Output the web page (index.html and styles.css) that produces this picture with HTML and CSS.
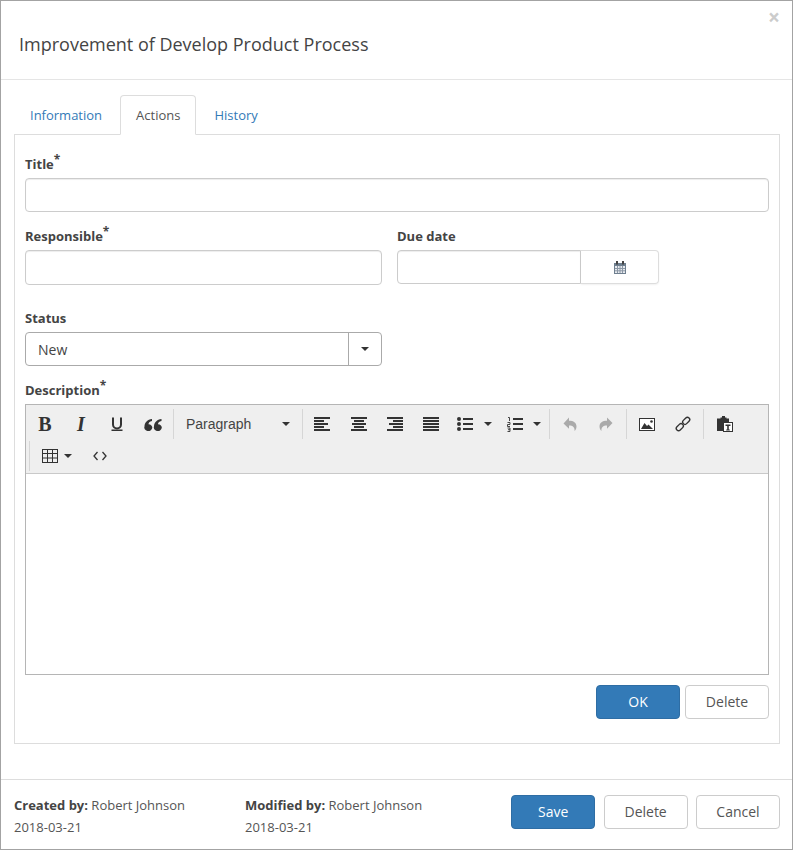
FILE: index.html
```html
<!DOCTYPE html>
<html lang="en">
  <head>
    <meta charset="UTF-8" />
    <title>Improvement of Develop Product Process</title>
    <link rel="stylesheet" href="styles.css">
  </head>
  <body>
    <div class="modal">
      <div class="modal-header">
        <h1 class="modal-title">Improvement of Develop Product Process</h1>
        <span class="close">×</span>
      </div>

      <ul class="tabs">
        <li class="tab"><a href="#">Information</a></li>
        <li class="tab active"><a href="#">Actions</a></li>
        <li class="tab"><a href="#">History</a></li>
      </ul>

      <div class="panel">
        <div class="field">
          <label class="label">Title<sup class="req">*</sup></label>
          <input type="text" class="input" />
        </div>

        <div class="two-cols">
          <div>
            <label class="label">Responsible<sup class="req">*</sup></label>
            <input type="text" class="input input-tall" />
          </div>
          <div>
            <label class="label">Due date</label>
            <div class="date-group">
              <input type="text" class="input date-input" />
              <div class="date-btn">
                <svg width="12" height="13" viewBox="0 0 12 13">
                  <rect x="0" y="2" width="12" height="11" fill="#6f7f8f" />
                  <rect x="1" y="5" width="10" height="7" fill="#e8ebef" />
                  <path d="M3.5 5v7M6 5v7M8.5 5v7M1 7.5h10M1 9.8h10" stroke="#8c98a6" stroke-width="1" fill="none" />
                  <rect x="2" y="0" width="2" height="3.5" fill="#444" />
                  <rect x="8" y="0" width="2" height="3.5" fill="#444" />
                </svg>
              </div>
            </div>
          </div>
        </div>

        <div class="field status-field">
          <label class="label">Status</label>
          <div class="select">
            <span class="select-text">New</span>
            <span class="select-arrow"><i class="caret"></i></span>
          </div>
        </div>

        <div class="field">
          <label class="label">Description<sup class="req">*</sup></label>
          <div class="editor">
            <div class="toolbar">
              <div class="group first">
                <span class="tool glyph-b">B</span>
                <span class="tool glyph-i">I</span>
                <span class="tool">
                  <svg width="14" height="16" viewBox="0 0 14 16">
                    <path d="M3 1.5v7a4 4 0 0 0 8 0v-7" stroke="#333" stroke-width="2" fill="none" />
                    <rect x="1.5" y="13.5" width="11" height="1.5" fill="#333" />
                  </svg>
                </span>
                <span class="tool">
                  <svg width="18" height="13" viewBox="0 0 18 13">
                    <path d="M8 1v2C5.5 3.500 4.500 5 4.500 6.200A4 3.400 0 1 1 0.500 8.500C0.500 4.500 3.500 1.500 8 1zM17.500 1v2C15 3.500 14 5 14 6.200A4 3.400 0 1 1 10 8.500C10 4.500 13 1.500 17.500 1z" fill="#333" />
                  </svg>
                </span>
              </div>

              <div class="group">
                <span class="tool format-select">
                  <span>Paragraph</span>
                  <i class="caret"></i>
                </span>
              </div>

              <div class="group align-group">
                <span class="tool">
                  <svg width="16" height="14" viewBox="0 0 16 14">
                    <path d="M0 0h16v2H0zM0 3h10v2H0zM0 6h14v2H0zM0 9h10v2H0zM0 12h16v2H0z" fill="#333" />
                  </svg>
                </span>
                <span class="tool tool-center">
                  <svg width="16" height="14" viewBox="0 0 16 14">
                    <path d="M0 0h16v2H0zM3 3h10v2H3zM1 6h14v2H1zM3 9h10v2H3zM0 12h16v2H0z" fill="#333" />
                  </svg>
                </span>
                <span class="tool">
                  <svg width="16" height="14" viewBox="0 0 16 14">
                    <path d="M0 0h16v2H0zM6 3h10v2H6zM2 6h14v2H2zM6 9h10v2H6zM0 12h16v2H0z" fill="#333" />
                  </svg>
                </span>
                <span class="tool">
                  <svg width="16" height="14" viewBox="0 0 16 14">
                    <path d="M0 0h16v2H0zM0 3h16v2H0zM0 6h16v2H0zM0 9h16v2H0zM0 12h16v2H0z" fill="#333" />
                  </svg>
                </span>
                <span class="tool tool-split tool-bullets">
                  <svg width="16" height="14" viewBox="0 0 16 14">
                    <circle cx="2" cy="2" r="2" fill="#333" />
                    <circle cx="2" cy="7" r="2" fill="#333" />
                    <circle cx="2" cy="12" r="2" fill="#333" />
                    <path d="M6 1h10v2H6zM6 6h10v2H6zM6 11h10v2H6z" fill="#333" />
                  </svg>
                  <i class="caret"></i>
                </span>
                <span class="tool tool-split tool-numbered">
                  <svg width="16" height="15" viewBox="0 0 16 15">
                    <path d="M1 0.500h1.500v3.500M0.500 5.500h2.500v2h-2.500v2h2.500M0.500 11h2.500v3.500h-2.500M1 12.700h2" stroke="#333" stroke-width="0.900" fill="none" />
                    <path d="M6 1h10v2H6zM6 6h10v2H6zM6 11h10v2H6z" fill="#333" />
                  </svg>
                  <i class="caret"></i>
                </span>
              </div>

              <div class="group">
                <span class="tool">
                  <svg width="14" height="14" viewBox="0 0 14 14">
                    <path d="M6 0.500v3.300c4.500 0 7.500 2 7.500 5.700 0 2-1 3.500-2 4.500 0.500-3.500-1.500-5.500-5.500-5.500v3.300L0.500 6.500z" fill="#aaa" />
                  </svg>
                </span>
                <span class="tool">
                  <svg width="14" height="14" viewBox="0 0 14 14">
                    <path d="M8 0.500v3.300c-4.500 0-7.500 2-7.500 5.700 0 2 1 3.500 2 4.500-0.500-3.500 1.500-5.500 5.500-5.500v3.300l5.500-5.800z" fill="#aaa" />
                  </svg>
                </span>
              </div>

              <div class="group">
                <span class="tool">
                  <svg width="16" height="13" viewBox="0 0 16 13">
                    <rect x="0.500" y="0.500" width="15" height="12" fill="#fff" stroke="#333" />
                    <circle cx="12.500" cy="3.500" r="1.300" fill="#333" />
                    <path d="M2 11l3.500-6 2.500 3 1.500-1.500 4.500 4.500z" fill="#333" />
                  </svg>
                </span>
                <span class="tool">
                  <svg width="16" height="16" viewBox="0 0 16 16">
                    <g fill="none" stroke="#333" stroke-width="1.400">
                      <rect x="-4" y="-2.300" width="8" height="4.600" rx="2.300" transform="translate(4.800 11.200) rotate(-45)" />
                      <rect x="-4" y="-2.300" width="8" height="4.600" rx="2.300" transform="translate(11.200 4.800) rotate(-45)" />
                    </g>
                  </svg>
                </span>
              </div>

              <div class="group paste-group">
                <span class="tool">
                  <svg width="16" height="16" viewBox="0 0 16 16">
                    <path d="M0 2.500h3.500V1.500h1.500V0h3v1.500h1.500v1H12V6H6v9H0z" fill="#333" />
                    <rect x="6.500" y="6.500" width="9" height="9" fill="#fff" stroke="#333" />
                    <path d="M8.500 8.500h5v1.500h-1.700v3.500h1v1h-3.600v-1h1V10H8.500z" fill="#333" />
                  </svg>
                </span>
              </div>

              <div class="group">
                <span class="tool tool-split table-tool">
                  <svg width="16" height="14" viewBox="0 0 16 14">
                    <rect x="0.500" y="0.500" width="15" height="13" fill="none" stroke="#333" />
                    <path d="M5.500 0.500v13M10.500 0.500v13M0.500 4.500h15M0.500 9h15" stroke="#333" fill="none" />
                  </svg>
                  <i class="caret"></i>
                </span>
                <span class="tool">
                  <svg width="14" height="10" viewBox="0 0 14 10">
                    <path d="M4.500 1L1 5l3.500 4M9.500 1L13 5l-3.500 4" stroke="#333" stroke-width="1.300" fill="none" />
                  </svg>
                </span>
              </div>
            </div>
            <div class="editor-body"></div>
          </div>
        </div>

        <div class="panel-actions">
          <button class="btn btn-primary">OK</button>
          <button class="btn">Delete</button>
        </div>
      </div>

      <div class="modal-footer">
        <div class="meta">
          <div><strong>Created by:</strong> Robert Johnson</div>
          <div>2018-03-21</div>
        </div>
        <div class="meta">
          <div><strong>Modified by:</strong> Robert Johnson</div>
          <div>2018-03-21</div>
        </div>
        <div class="footer-actions">
          <button class="btn btn-primary">Save</button>
          <button class="btn">Delete</button>
          <button class="btn">Cancel</button>
        </div>
      </div>
    </div>
  </body>
</html>
```

FILE: styles.css
```css
* {
  box-sizing: border-box;
}
body {
  margin: 0;
  font-family: "Open Sans", sans-serif;
  font-size: 13px;
  color: #555;
  background-color: #fff;
}
.modal {
  position: relative;
  width: 793px;
  height: 850px;
  border: 1px solid #a3a3a3;
  overflow: hidden;
}
.modal-header {
  height: 79px;
  border-bottom: 1px solid #e5e5e5;
  padding: 31px 18px 0;
}
.modal-title {
  margin: 0;
  font-size: 18px;
  font-weight: 400;
  line-height: 25px;
  color: #444;
}
.close {
  position: absolute;
  top: 4px;
  right: 12px;
  font-size: 21px;
  line-height: 25px;
  font-weight: 700;
  color: #ccc;
}

/* tabs */
.tabs {
  display: flex;
  list-style: none;
  margin: 15px 0 -1px;
  padding: 0 13px;
  position: relative;
}
.tab {
  margin-right: 2px;
}
.tab a {
  display: block;
  height: 40px;
  padding: 9px 15px;
  line-height: 20px;
  border: 1px solid transparent;
  border-radius: 4px 4px 0 0;
  color: #337ab7;
  text-decoration: none;
}
.tab.active a {
  color: #555;
  background-color: #fff;
  border-color: #ddd #ddd #fff;
}
.panel {
  margin: 0 12px 35px 13px;
  height: 610px;
  border: 1px solid #ddd;
  padding: 19px 10px 0;
}

/* form */
.field {
  margin-bottom: 14px;
}
.label {
  display: block;
  margin-bottom: 4px;
  font-weight: 700;
  line-height: 20px;
  color: #444;
}
.req {
  font-size: 12px;
  line-height: 0;
}
.input {
  display: block;
  width: 100%;
  height: 34px;
  border: 1px solid #ccc;
  border-radius: 4px;
  box-shadow: inset 0 1px 1px rgba(0, 0, 0, 0.075);
  background-color: #fff;
}
.input-tall {
  height: 35px;
}
.two-cols {
  display: grid;
  grid-template-columns: 357px 1fr;
  column-gap: 15px;
  margin-bottom: 23px;
}
.date-group {
  display: flex;
  width: 262px;
  height: 34px;
}
.date-input {
  width: 184px;
  border-radius: 4px 0 0 4px;
}
.date-btn {
  flex: 1;
  display: flex;
  align-items: center;
  justify-content: center;
  border: 1px solid #ddd;
  border-left: 0;
  border-radius: 0 4px 4px 0;
  box-shadow: 0 1px 2px rgba(0, 0, 0, 0.06);
}
.select {
  display: flex;
  width: 357px;
  height: 34px;
  border: 1px solid #aaa;
  border-radius: 4px;
  font-size: 14px;
  line-height: 34px;
}
.select-text {
  flex: 1;
  padding-left: 12px;
  color: #444;
}
.select-arrow {
  width: 33px;
  display: flex;
  align-items: center;
  justify-content: center;
  border-left: 1px solid #aaa;
}
.caret {
  display: inline-block;
  width: 0;
  height: 0;
  border-top: 4px solid #333;
  border-left: 4px solid transparent;
  border-right: 4px solid transparent;
}

/* editor */
.editor {
  height: 271px;
  border: 1px solid #b5b5b5;
}
.toolbar {
  display: flex;
  flex-wrap: wrap;
  height: 69px;
  padding: 2px 0 2px 1px;
  background-color: #efefef;
  border-bottom: 1px solid #c9c9c9;
}
.group {
  display: flex;
  height: 30px;
  margin: 2px 0 0 2px;
  padding-left: 2px;
  border-left: 1px solid #d6d6d6;
}
.group.first {
  margin-left: 0;
  padding-left: 0;
  border-left: 0;
}
.align-group {
  padding-left: 1px;
}
.paste-group {
  padding-left: 3px;
}
.tool {
  display: flex;
  align-items: center;
  justify-content: center;
  width: 36px;
  height: 30px;
  color: #333;
}
.tool-center {
  margin-left: 1px;
}
.glyph-b {
  font-family: "Liberation Serif", serif;
  font-size: 20px;
  font-weight: 700;
}
.glyph-i {
  font-family: "Liberation Serif", serif;
  font-size: 20px;
  font-style: italic;
  font-weight: 700;
}
.format-select {
  width: 124px;
  justify-content: space-between;
  padding: 0 10px;
  font-family: "Liberation Sans", sans-serif;
  font-size: 14px;
  color: #444;
}
.tool-split {
  justify-content: flex-start;
  padding-left: 8px;
}
.tool-bullets {
  width: 50px;
  gap: 11px;
}
.tool-numbered {
  width: 48px;
  gap: 10px;
}
.table-tool {
  width: 50px;
  gap: 6px;
  padding-left: 10px;
}
.editor-body {
  height: 200px;
  background-color: #fff;
}

/* buttons */
.btn {
  width: 84px;
  height: 34px;
  padding: 0 0 2px;
  border: 1px solid #ccc;
  border-radius: 4px;
  background-color: #fff;
  color: #555;
  font-family: "Open Sans", sans-serif;
  font-size: 14px;
}
.btn-primary {
  background-color: #337ab7;
  border-color: #2e6da4;
  color: #fff;
}
.panel-actions {
  display: flex;
  justify-content: flex-end;
  gap: 5px;
  margin-top: -4px;
}

/* footer */
.modal-footer {
  display: flex;
  height: 70px;
  border-top: 1px solid #ddd;
  padding: 14px 12px 0 13px;
  line-height: 22px;
}
.meta {
  width: 231px;
}
.meta strong {
  color: #444;
}
.footer-actions {
  display: flex;
  gap: 8.4px;
  margin-left: auto;
  margin-top: 1px;
}
```
